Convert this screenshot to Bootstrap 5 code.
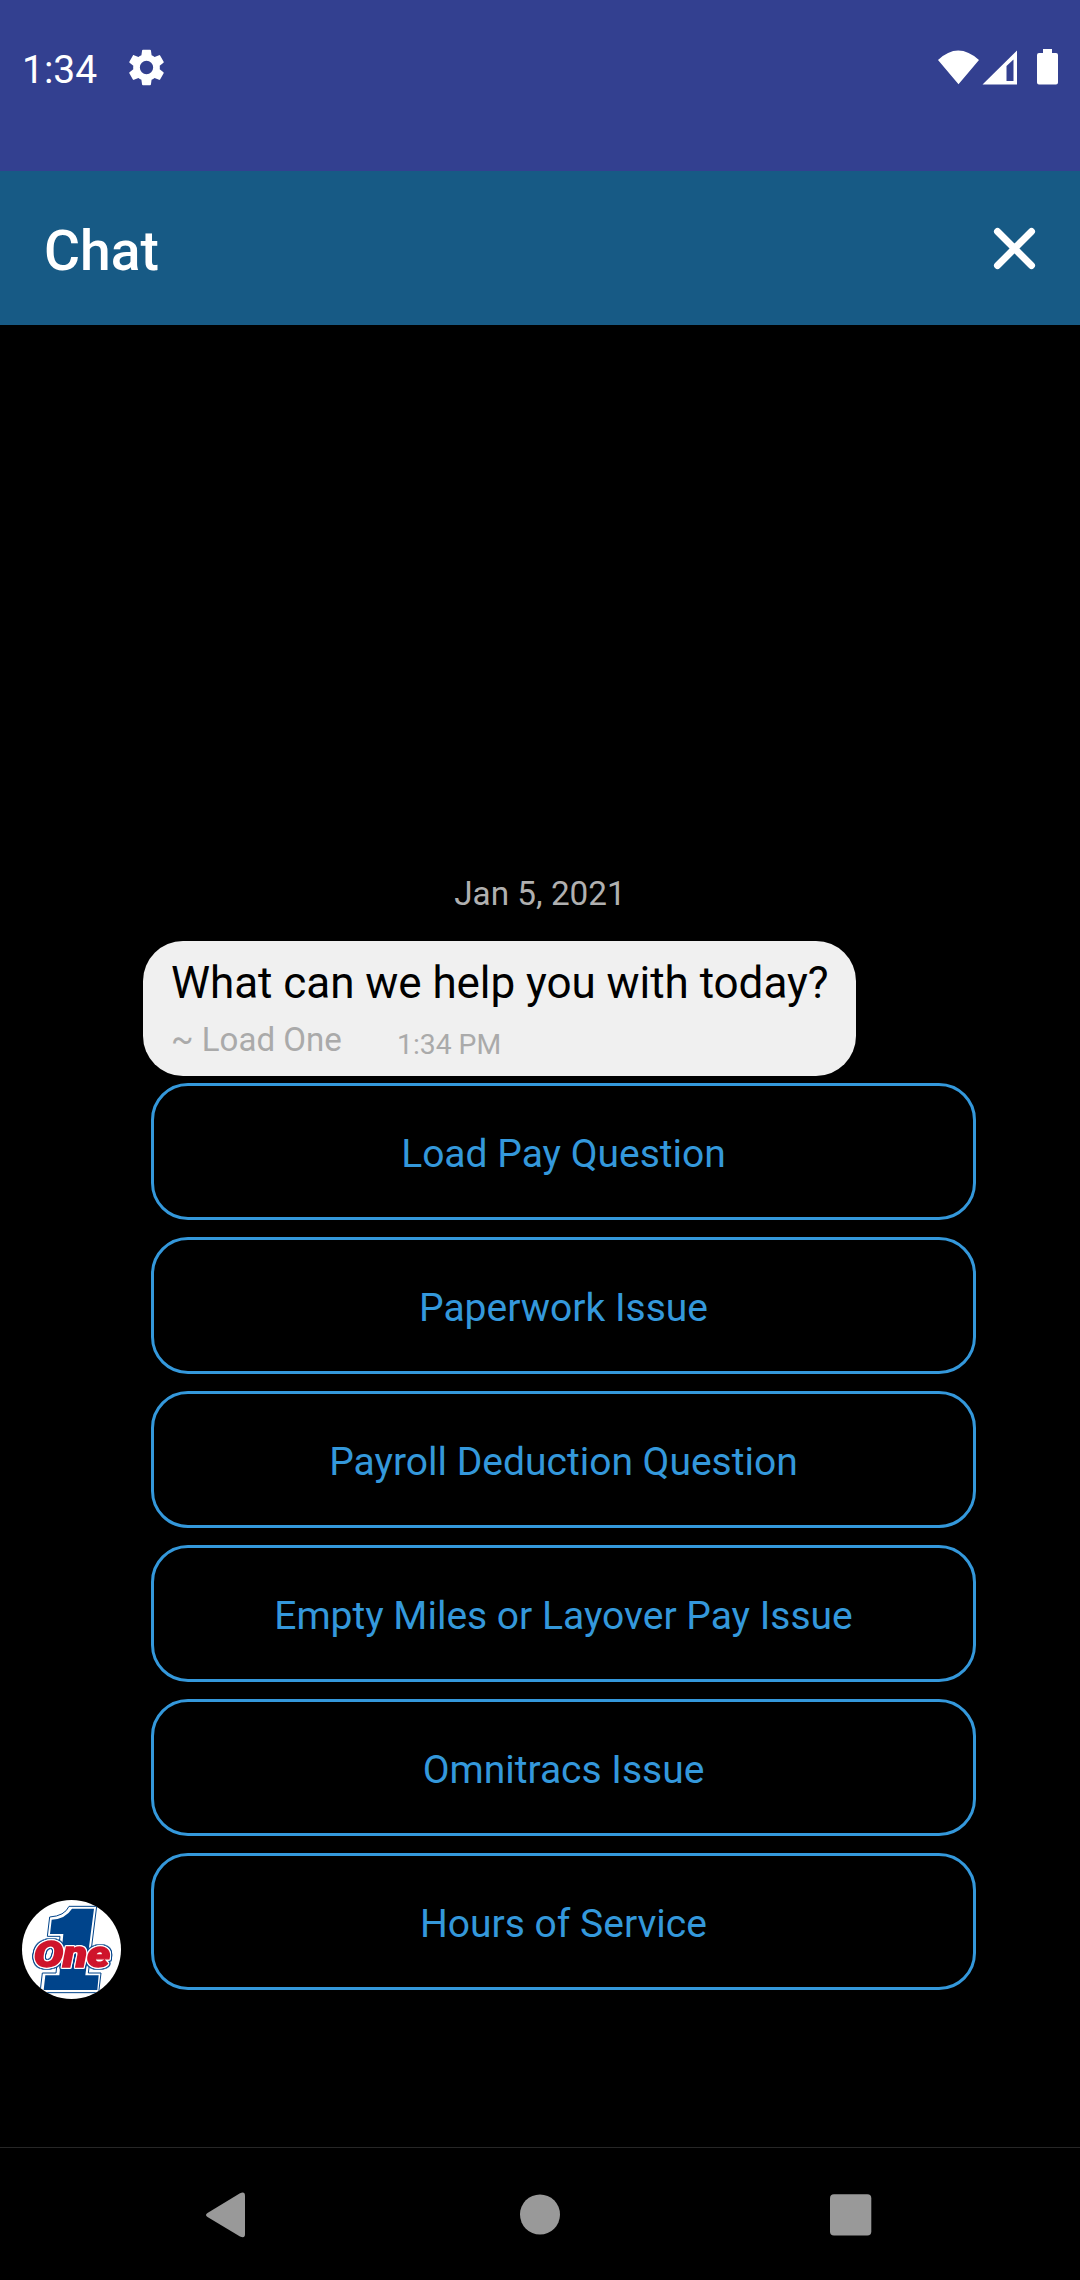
<!DOCTYPE html>
<html lang="en">
<head>
<meta charset="utf-8">
<meta name="viewport" content="width=device-width, initial-scale=1">
<title>Chat</title>
<link href="https://cdn.jsdelivr.net/npm/bootstrap@5.3.0/dist/css/bootstrap.min.css" rel="stylesheet">
<style>
body{font-family:Roboto,"Noto Sans",sans-serif;background:#000;height:2280px;overflow:hidden}
svg{display:block;flex:none}
.status-bar{height:171px;background:#334090;padding:0 20px 0 22px}
.status-row{height:134px}
.clock{font-size:39px;line-height:46px;width:106px;padding-top:5px}
.chat-header{height:154px;background:#175a85;padding:0 43px 0 44px}
.chat-title{font-size:55.2px;font-weight:500;line-height:62px;padding-top:5px}
.thread{padding-bottom:148px}
.day-label{font-size:33.3px;line-height:40px;color:#b0b0b0;margin-bottom:27px}
.message-row{padding-left:22px}
.message-col{width:833px;margin:0 0 9px 22px}
.bubble{width:713px;height:135px;border-radius:40px;background:#f0f0f0;color:#000;padding:16px 28px 0}
.bubble-text{font-size:44px;letter-spacing:-.05px;line-height:52px;white-space:nowrap}
.bubble-meta{color:#aaa;white-space:nowrap;margin-top:11px}
.sender{font-size:33.1px;line-height:40px;width:226px}
.sent-at{font-size:28.3px;line-height:40px;padding-top:5px}
.replies{margin:7px 0 0 8px;gap:17px}
.reply{--bs-btn-color:#3498db;--bs-btn-border-color:#3498db;--bs-btn-font-size:39px;--bs-btn-line-height:46px;--bs-btn-border-radius:37px;--bs-btn-border-width:3px;--bs-btn-padding-y:0;height:137px;width:825px;padding-top:5px}
.nav-keys{height:133px;border-top:1px solid #262626;padding:1px 208px 0 206px}
.brand-word{font:italic 900 108px Roboto,"Liberation Sans",sans-serif;fill:#cf142b;stroke:#cf142b;stroke-width:4px;filter:drop-shadow(3px 0 0 #fff) drop-shadow(-3px 0 0 #fff) drop-shadow(0 3px 0 #fff) drop-shadow(0 -3px 0 #fff) drop-shadow(2px 0 0 #00448b) drop-shadow(-2px 0 0 #00448b) drop-shadow(0 2px 0 #00448b) drop-shadow(0 -2px 0 #00448b)}
</style>
</head>
<body class="d-flex flex-column">
<div class="status-bar text-white">
  <div class="status-row d-flex align-items-center">
    <span class="clock">1:34</span>
    <svg width="37" height="37" viewBox="2 2 20 20" fill="#fff"><path d="M19.14 12.94c.04-.3.06-.61.06-.94 0-.32-.02-.64-.07-.94l2.03-1.58a.49.49 0 0 0 .12-.61l-1.92-3.32a.488.488 0 0 0-.59-.22l-2.39.96c-.5-.38-1.03-.7-1.62-.94L14.4 2.81a.484.484 0 0 0-.48-.41h-3.84c-.24 0-.43.17-.47.41l-.36 2.54c-.59.24-1.13.57-1.62.94l-2.39-.96c-.22-.08-.47 0-.59.22L2.74 8.87c-.12.21-.08.47.12.61l2.03 1.58c-.05.3-.09.63-.09.94s.02.64.07.94l-2.03 1.58a.49.49 0 0 0-.12.61l1.92 3.32c.12.22.37.29.59.22l2.39-.96c.5.38 1.03.7 1.62.94l.36 2.54c.05.24.24.41.48.41h3.84c.24 0 .44-.17.47-.41l.36-2.54c.59-.24 1.13-.56 1.62-.94l2.39.96c.22.08.47 0 .59-.22l1.92-3.32c.12-.22.07-.47-.12-.61l-2.01-1.58zM12 15.6A3.6 3.6 0 1 1 12 8.4a3.6 3.6 0 0 1 0 7.2z"/></svg>
    <svg class="ms-auto" width="124" height="40" viewBox="936 47 124 40" fill="#fff"><path d="M938 60Q958 41 979 60L958.500 84.300ZM982.500 84.500 1017 50.500V84.500ZM1006.500 66V81H1013.500V59.500Z" fill-rule="evenodd"/><path d="M1043 49H1052V53H1056Q1058 53 1058 55V82.500Q1058 84.500 1056 84.500H1039Q1037 84.500 1037 82.500V55Q1037 53 1039 53H1043Z"/></svg>
  </div>
</div>
<header class="chat-header d-flex align-items-center justify-content-between text-white">
  <h1 class="chat-title m-0">Chat</h1>
  <svg width="45" height="45" viewBox="0 0 45 45" stroke="#fff" stroke-width="7" stroke-linecap="round"><path d="M5.500 5.500 39.500 39.500M39.500 5.500 5.500 39.500"/></svg>
</header>
<main class="thread flex-grow-1 d-flex flex-column justify-content-end">
  <div class="day-label text-center">Jan 5, 2021</div>
  <div class="message-row d-flex align-items-end">
    <svg width="99" height="99" viewBox="36 60 297 297">
      <defs><clipPath id="disc"><circle cx="184.500" cy="208.500" r="148.500"/></clipPath></defs>
      <g clip-path="url(#disc)">
        <path fill="#fff" d="M36 60H333V357H36Z"/>
        <path fill="none" stroke="#00448b" stroke-width="3" d="M260 79H177Q164 108 119 111L112 169H150L138 279H97L90 338H266L273 279H235Z"/>
        <path fill="#00448b" d="M252 86H186Q166 117 125 119L120 162H160L148 286H106L101 330H262L266 286H226Z"/>
        <text class="brand-word" x="71" y="261" textLength="230" lengthAdjust="spacingAndGlyphs">One</text>
      </g>
    </svg>
    <div class="message-col">
      <div class="bubble">
        <div class="bubble-text">What can we help you with today?</div>
        <div class="bubble-meta d-flex"><span class="sender">~ Load One</span><span class="sent-at">1:34 PM</span></div>
      </div>
      <div class="replies d-flex flex-column">
        <button class="btn reply">Load Pay Question</button>
        <button class="btn reply">Paperwork Issue</button>
        <button class="btn reply">Payroll Deduction Question</button>
        <button class="btn reply">Empty Miles or Layover Pay Issue</button>
        <button class="btn reply">Omnitracs Issue</button>
        <button class="btn reply">Hours of Service</button>
      </div>
    </div>
  </div>
</main>
<nav class="nav-keys d-flex align-items-center justify-content-between">
  <svg width="44" height="46" viewBox="0 0 44 46" fill="#999"><path d="M1.500 21 34 1.300Q39 -1 39 4V42Q39 47 34 44.500L1.500 25Q-1.500 23 1.500 21Z"/></svg>
  <svg width="40" height="42" viewBox="0 0 40 42" fill="#999"><circle cx="20" cy="20.500" r="20"/></svg>
  <svg width="42" height="42" viewBox="0 0 42 42" fill="#999"><rect width="41.300" height="41.300" y=".3" rx="4"/></svg>
</nav>
<script src="https://cdn.jsdelivr.net/npm/bootstrap@5.3.0/dist/js/bootstrap.bundle.min.js"></script>
</body>
</html>
